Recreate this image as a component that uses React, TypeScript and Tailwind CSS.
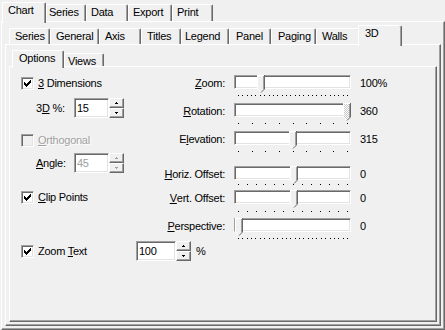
import type { ReactNode } from 'react';

const SUNKEN =
  'border border-t-[#a0a0a0] border-l-[#a0a0a0] border-r-white border-b-white shadow-[inset_1px_1px_0_#696969,inset_-1px_-1px_0_#e3e3e3]';
const RAISED =
  'border border-t-white border-l-white border-r-[#696969] border-b-[#696969] shadow-[inset_-1px_-1px_0_#a0a0a0]';
const PANEL =
  'border-t border-l border-r border-b border-t-white border-l-white border-r-[#696969] border-b-[#696969] shadow-[inset_-1px_-1px_0_#a0a0a0]';

const CHECK = ['......X', '.....XX', 'X...XXX', 'XX.XXX.', 'XXXXX..', '.XXX...', '..X....'];

function U({ children }: { children: ReactNode }) {
  return <span className="underline">{children}</span>;
}

function Tab({ label, className, selected }: { label: string; className: string; selected?: boolean }) {
  return (
    <div
      className={`shrink-0 whitespace-nowrap rounded-t-[2px] border-t border-l border-r border-t-white border-l-white border-r-[#696969] bg-[#f0f0f0] leading-[14px] shadow-[inset_-1px_0_0_#a0a0a0] ${
        selected ? 'relative z-10 -mb-[2px]' : ''
      } ${className}`}
    >
      {label}
    </div>
  );
}

function CheckBox({ checked, disabled }: { checked?: boolean; disabled?: boolean }) {
  return (
    <div
      className={`flex h-[13px] w-[13px] shrink-0 items-center justify-center ${SUNKEN} ${
        disabled ? 'bg-[#f0f0f0]' : 'bg-white'
      }`}
    >
      {checked && (
        <svg width="7" height="7" shapeRendering="crispEdges">
          {CHECK.flatMap((row, y) =>
            row.split('').map((c, x) => (c === 'X' ? <rect key={`${x}-${y}`} x={x} y={y} width="1" height="1" fill="#000" /> : null))
          )}
        </svg>
      )}
    </div>
  );
}

function Field({ value, w, disabled }: { value: string; w: string; disabled?: boolean }) {
  return (
    <div
      className={`flex h-[20px] shrink-0 items-center bg-white pl-[2px] ${SUNKEN} ${w} ${
        disabled ? 'text-[#a0a0a0]' : ''
      }`}
    >
      {value}
    </div>
  );
}

function SpinBtn({ up, disabled }: { up?: boolean; disabled?: boolean }) {
  const c = disabled ? '#a0a0a0' : '#000';
  return (
    <div className={`flex h-[10px] w-[15px] items-center justify-center bg-[#f0f0f0] ${RAISED}`}>
      <svg width="3" height="2" shapeRendering="crispEdges">
        {up ? (
          <>
            <rect x="1" y="0" width="1" height="1" fill={c} />
            <rect x="0" y="1" width="3" height="1" fill={c} />
          </>
        ) : (
          <>
            <rect x="0" y="0" width="3" height="1" fill={c} />
            <rect x="1" y="1" width="1" height="1" fill={c} />
          </>
        )}
      </svg>
    </div>
  );
}

function Spin({ disabled }: { disabled?: boolean }) {
  return (
    <div className="flex shrink-0 flex-col">
      <SpinBtn up disabled={disabled} />
      <SpinBtn disabled={disabled} />
    </div>
  );
}

function Slider({ thumb, ticks, tickGap, hatched }: { thumb: number; ticks: number; tickGap: string; hatched?: boolean }) {
  const xs = Array.from({ length: ticks }, (_, i) => Math.round(4 + (i * 109) / (ticks - 1)));
  return (
    <div className="relative h-[22px] w-[117px] shrink-0">
      <div className={`h-[14px] w-[117px] bg-white ${SUNKEN}`} />
      <svg className="absolute top-0" style={{ left: thumb }} width="8" height="18" shapeRendering="crispEdges">
        {hatched && (
          <defs>
            <pattern id="hatch" width="2" height="2" patternUnits="userSpaceOnUse">
              <rect width="2" height="2" fill="#ffffff" />
              <rect width="1" height="1" fill="#c8c8c8" />
              <rect x="1" y="1" width="1" height="1" fill="#c8c8c8" />
            </pattern>
          </defs>
        )}
        <path d="M0 0H8V14L4 18L0 14Z" fill={hatched ? 'url(#hatch)' : '#f0f0f0'} />
        <path d="M0.5 14V0.5H7" stroke="#fff" fill="none" />
        <path d="M0.5 14L3.5 17" stroke="#fff" fill="none" shapeRendering="auto" />
        <path d="M7.5 0V14" stroke="#696969" fill="none" />
        <path d="M7.5 14L4 17.5" stroke="#696969" fill="none" shapeRendering="auto" />
        <path d="M6.5 1V13.5" stroke="#a0a0a0" fill="none" />
      </svg>
      <svg className={`block ${tickGap}`} width="117" height="1" shapeRendering="crispEdges">
        {xs.map((x) => (
          <rect key={x} x={x} y="0" width="1" height="1" fill="#000" />
        ))}
      </svg>
    </div>
  );
}

function SliderRow({
  label,
  value,
  className,
  ...s
}: {
  label: ReactNode;
  value: string;
  className: string;
  thumb: number;
  ticks: number;
  tickGap: string;
  hatched?: boolean;
}) {
  return (
    <div className={`flex items-start ${className}`}>
      <div className="flex h-[16px] w-[67px] items-center justify-end whitespace-nowrap">{label}</div>
      <div className="ml-[9px]">
        <Slider {...s} />
      </div>
      <div className="ml-[9px] flex h-[16px] items-center">{value}</div>
    </div>
  );
}

export default function App() {
  return (
    <div className="flex h-[330px] w-[445px] flex-col overflow-hidden bg-[#f0f0f0] font-['Liberation_Sans',Arial,sans-serif] text-[11px] tracking-[-0.25px] text-black">
      {/* Top tabs */}
      <div className="flex h-[21px] shrink-0 items-end pl-[2px]">
        <Tab label="Chart" selected className="h-[21px] w-[44px] pl-[5px]" />
        <Tab label="Series" className="h-[17px] w-[40px] pl-[2px]" />
        <Tab label="Data" className="h-[17px] w-[42px] pl-[4px]" />
        <Tab label="Export" className="h-[17px] w-[44px] pl-[4px]" />
        <Tab label="Print" className="h-[17px] w-[41px] pl-[4px]" />
      </div>

      <div className={`ml-px flex flex-1 flex-col bg-[#f0f0f0] px-[3px] pb-[3px] ${PANEL}`}>
        {/* Chart sub tabs */}
        <div className="flex h-[22px] shrink-0 items-end pl-[4px]">
          <Tab label="Series" className="h-[16px] w-[41px] pl-[5px]" />
          <Tab label="General" className="h-[16px] w-[49px] pl-[5px]" />
          <Tab label="Axis" className="h-[16px] w-[42px] pl-[5px]" />
          <Tab label="Titles" className="h-[16px] w-[40px] pl-[5px]" />
          <Tab label="Legend" className="h-[16px] w-[48px] pl-[3px]" />
          <Tab label="Panel" className="h-[16px] w-[42px] pl-[6px]" />
          <Tab label="Paging" className="h-[16px] w-[45px] pl-[6px]" />
          <Tab label="Walls" className="h-[16px] w-[44px] pl-[5px]" />
          <Tab label="3D" selected className="-ml-[2px] h-[21px] w-[44px] pl-[6px]" />
        </div>

        <div className={`flex flex-1 flex-col bg-[#f0f0f0] px-[3px] pb-[3px] ${PANEL}`}>
          {/* 3D sub tabs */}
          <div className="flex h-[21px] shrink-0 items-end pl-[3px]">
            <Tab label="Options" selected className="h-[18px] w-[52px] pl-[6px]" />
            <Tab label="Views" className="h-[13px] w-[40px] pl-[3px]" />
          </div>

          <div className={`flex flex-1 bg-[#f0f0f0] ${PANEL}`}>
            {/* Left options */}
            <div className="flex w-[148px] shrink-0 flex-col pl-[11px]">
              <div className="mt-[10px] flex h-[13px] items-center gap-[4px]">
                <CheckBox checked />
                <span className="whitespace-nowrap">
                  <U>3</U> Dimensions
                </span>
              </div>
              <div className="mt-[8px] flex h-[20px] items-center">
                <span className="w-[53px] shrink-0 pl-[15px]">
                  3<U>D</U> %:
                </span>
                <Field value="15" w="w-[35px]" />
                <Spin />
              </div>
              <div className="mt-[16px] flex h-[13px] items-center gap-[4px]">
                <CheckBox disabled />
                <span className="text-[#a0a0a0] [text-shadow:1px_1px_0_#fff]">
                  <U>O</U>rthogonal
                </span>
              </div>
              <div className="mt-[6px] flex h-[20px] items-center">
                <span className="w-[53px] shrink-0 pl-[15px]">
                  <U>A</U>ngle:
                </span>
                <Field value="45" w="w-[35px]" disabled />
                <Spin disabled />
              </div>
              <div className="mt-[18px] flex h-[13px] items-center gap-[4px]">
                <CheckBox checked />
                <span className="whitespace-nowrap">
                  <U>C</U>lip Points
                </span>
              </div>
              <div className="mt-[37px] flex h-[20px] items-center">
                <CheckBox checked />
                <span className="ml-[4px] w-[98px] shrink-0 whitespace-nowrap">
                  Zoom <U>T</U>ext
                </span>
                <Field value="100" w="w-[40px]" />
                <Spin />
                <span className="ml-[5px]">%</span>
              </div>
            </div>

            {/* Right sliders */}
            <div className="flex flex-col">
              <SliderRow className="mt-[8px]" label={<><U>Z</U>oom:</>} value="100%" thumb={23} ticks={26} tickGap="mt-[6px]" />
              <SliderRow className="mt-[6px]" label={<><U>R</U>otation:</>} value="360" thumb={109} ticks={9} tickGap="mt-[6px]" hatched />
              <SliderRow className="mt-[6px]" label={<>E<U>l</U>evation:</>} value="315" thumb={55} ticks={9} tickGap="mt-[6px]" />
              <SliderRow className="mt-[13px]" label={<><U>H</U>oriz. Offset:</>} value="0" thumb={56} ticks={13} tickGap="mt-[4px]" />
              <SliderRow className="mt-[2px]" label={<><U>V</U>ert. Offset:</>} value="0" thumb={56} ticks={13} tickGap="mt-[7px]" />
              <SliderRow className="mt-[6px]" label={<><U>P</U>erspective:</>} value="0" thumb={1} ticks={26} tickGap="mt-[6px]" />
            </div>
          </div>
        </div>
      </div>
    </div>
  );
}
